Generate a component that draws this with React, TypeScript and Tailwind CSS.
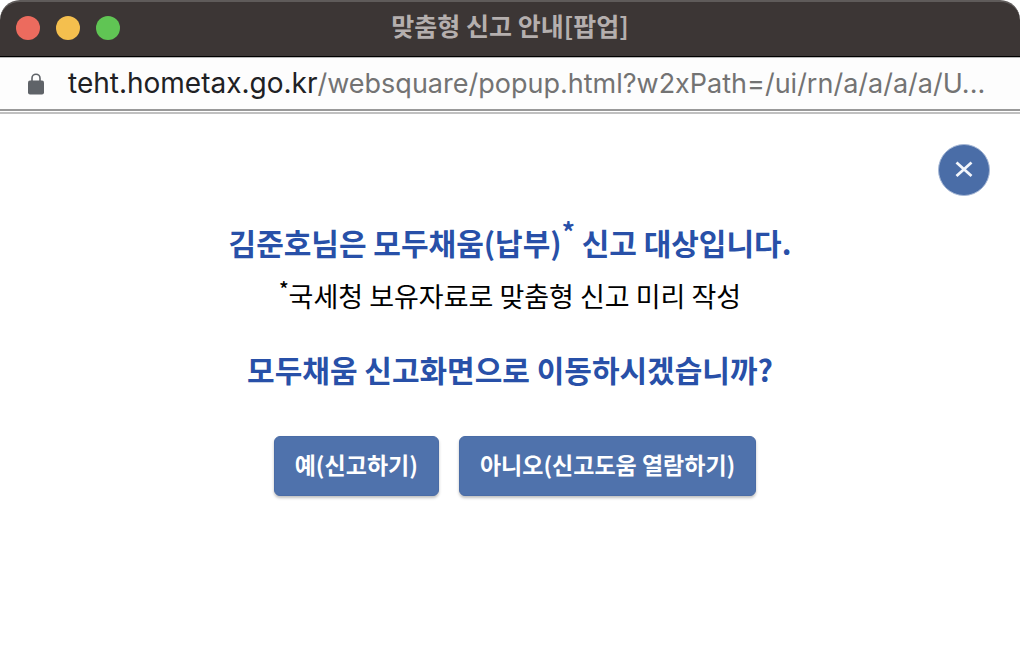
import React from "react";

function TitleBar() {
  return (
    <header className="relative flex h-[57px] items-center justify-center rounded-t-[20px] border-t-2 border-b border-t-[#5f5b5a] border-b-black bg-[#3c3635]">
      <div className="absolute top-[14px] left-4 flex gap-4">
        <button type="button" aria-label="닫기" className="size-6 rounded-full bg-[#ec6b5e]" />
        <button type="button" aria-label="최소화" className="size-6 rounded-full bg-[#f4bf4e]" />
        <button type="button" aria-label="최대화" className="size-6 rounded-full bg-[#60c554]" />
      </div>
      <h1 className="pb-2 text-[25px] leading-8 font-bold text-[#b5afae]">맞춤형 신고 안내[팝업]</h1>
    </header>
  );
}

function AddressBar() {
  return (
    <div className="flex h-[54px] items-center gap-6 border-t border-b-2 border-t-[#b8b8b8] border-b-[#999999] bg-[#fdfdfd] px-7">
      <svg viewBox="0 0 16 22" className="h-[22px] w-4 shrink-0" aria-hidden="true">
        <path d="M4 8V5.2a4 4 0 0 1 8 0V8" fill="none" stroke="#5f6368" strokeWidth="1.6" />
        <rect x="0" y="7.5" width="16" height="14" rx="2" fill="#5f6368" />
      </svg>
      <p className="font-['Inter','Noto_Sans_CJK_KR',sans-serif] text-[27px] leading-9 whitespace-nowrap text-[#737373]">
        <span className="text-[28px] text-[#202124]">teht.hometax.go.kr</span>/websquare/popup.html?w2xPath=/ui/rn/a/a/a/a/U...
      </p>
    </div>
  );
}

function ActionButton({ children }: { children: React.ReactNode }) {
  return (
    <button
      type="button"
      className="h-[60px] rounded-md border border-[#4a6ca6] bg-[#4f72ac] px-5 pb-1 text-[23px] leading-8 font-bold text-white shadow-[0_2px_3px_rgba(0,0,0,0.25)]"
    >
      {children}
    </button>
  );
}

export default function App() {
  return (
    <div className="min-h-screen bg-white font-['Noto_Sans_CJK_KR',sans-serif] text-black">
      <TitleBar />
      <AddressBar />
      <main className="mt-px border-t-2 border-[#c0c0c0] px-[30px] pt-[30px]">
        <div className="flex justify-end">
          <button
            type="button"
            aria-label="팝업 닫기"
            className="flex size-[52px] items-center justify-center rounded-full border border-[#a5b7d5] bg-[#4a6da7]"
          >
            <svg viewBox="0 0 18 18" className="size-[18px]" aria-hidden="true">
              <path d="M1.5 1.5 16.5 15M16.5 1.5 1.5 15" stroke="#f3f6fb" strokeWidth="2.8" />
            </svg>
          </button>
        </div>
        <section className="mt-[22px] text-center">
          <h2 className="text-[30px] leading-[48px] font-bold text-[#2850a8]">
            김준호님은 모두채움(납부)<sup className="text-[26px]">*</sup> 신고 대상입니다.
          </h2>
          <p className="mt-[6px] text-[27px] leading-[48px]">
            <sup className="text-[20px] font-medium">*</sup>국세청 보유자료로 맞춤형 신고 미리 작성
          </p>
          <p className="mt-[25px] text-[30px] leading-[48px] font-bold text-[#2850a8]">모두채움 신고화면으로 이동하시겠습니까?</p>
        </section>
        <div className="mt-[43px] flex justify-center gap-5 pl-[10px]">
          <ActionButton>예(신고하기)</ActionButton>
          <ActionButton>아니오(신고도움 열람하기)</ActionButton>
        </div>
      </main>
    </div>
  );
}
